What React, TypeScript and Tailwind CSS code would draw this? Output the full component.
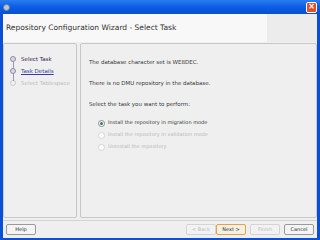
const font = { fontFamily: "Tahoma, 'DejaVu Sans', 'Liberation Sans', sans-serif" };

function Step({ label, state, first, last }: { label: string; state: "current" | "link" | "off"; first?: boolean; last?: boolean }) {
  return (
    <div className="flex items-center h-[12px]">
      <div className="w-[16px] h-full relative flex justify-center items-center">
        {!first && <div className="absolute left-[7.5px] top-0 h-[4px] w-px bg-[#9a9ab8]" />}
        {!last && <div className="absolute left-[7.5px] bottom-0 h-[4px] w-px bg-[#9a9ab8]" />}
        <div
          className={`w-[6px] h-[6px] rounded-full border ${
            state === "off" ? "border-[#c8c8c8] bg-[#f4f4f4]" : "border-[#8a8aa8] bg-[#d8d8e8]"
          }`}
        />
      </div>
      <span
        className={`text-[5.5px] ${
          state === "current"
            ? "text-[#302050] font-medium"
            : state === "link"
            ? "text-[#3a3aa0] underline"
            : "text-[#bcbcbc]"
        }`}
      >
        {label}
      </span>
    </div>
  );
}

function Radio({ label, checked, disabled }: { label: string; checked?: boolean; disabled?: boolean }) {
  return (
    <div className="flex items-center gap-[3px] h-[12px]">
      <div
        className={`w-[7px] h-[7px] rounded-full border flex items-center justify-center bg-white ${
          disabled ? "border-[#d4d4d4]" : "border-[#7a8aa0]"
        }`}
      >
        {checked && <div className="w-[3px] h-[3px] rounded-full bg-[#507040]" />}
      </div>
      <span className={`text-[5px] ${disabled ? "text-[#b8b8b8]" : "text-[#383838]"}`}>{label}</span>
    </div>
  );
}

function Btn({ label, disabled, focus }: { label: string; disabled?: boolean; focus?: boolean }) {
  return (
    <div
      className={`w-[30px] h-[11px] flex items-center justify-center text-[5px] rounded-[2px] border ${
        focus
          ? "border-[#e8a040] bg-[#f4f0e4] text-[#303030]"
          : disabled
          ? "border-[#d4d4d4] bg-[#f2f2f2] text-[#bcbcbc]"
          : "border-[#9a9a9a] bg-[#f4f4f4] text-[#303030]"
      }`}
    >
      {label}
    </div>
  );
}

export default function App() {
  return (
    <div className="w-[320px] h-[240px] bg-[#0a4fd8] flex flex-col overflow-hidden" style={font}>
      {/* title bar */}
      <div className="h-[14px] flex items-center justify-between px-[3px] bg-gradient-to-b from-[#2a7cf0] via-[#0b5ce6] to-[#0a4fd0]">
        <div className="w-[7px] h-[7px] rounded-full bg-[#b8c8d8] border border-[#708090]" />
        <div className="w-[11px] h-[11px] rounded-[2px] bg-[#e0502a] border border-white flex items-center justify-center text-white text-[8px] font-bold leading-none">
          ×
        </div>
      </div>
      <div className="flex-1 mx-[3px] mb-[2px] bg-[#efefef] flex flex-col">
        {/* header */}
        <div className="h-[28px] flex">
          <div className="w-[264px] bg-[#f8f8f8] flex items-center pl-[3px] text-[7.5px] text-[#303030]">
            Repository Configuration Wizard - Select Task
          </div>
          <div className="flex-1 bg-[#ececec]" />
        </div>
        {/* panels */}
        <div className="flex-1 flex gap-[3px] pt-[1px] pb-[2px]">
          <div className="w-[74px] border border-[#c8c8c8] rounded-[2px] pt-[9px] pl-[1px]">
            <Step label="Select Task" state="current" first />
            <Step label="Task Details" state="link" />
            <Step label="Select Tablespace" state="off" last />
          </div>
          <div className="flex-1 border border-[#c8c8c8] rounded-[2px] pt-[14px] pl-[8px] flex flex-col text-[5.5px] text-[#383838]">
            <div className="h-[8px] flex items-center">The database character set is WE8DEC.</div>
            <div className="h-[13px]" />
            <div className="h-[8px] flex items-center">There is no DMU repository in the database.</div>
            <div className="h-[13px]" />
            <div className="h-[8px] flex items-center">Select the task you want to perform:</div>
            <div className="pl-[9px] pt-[9px]">
              <Radio label="Install the repository in migration mode" checked />
              <Radio label="Install the repository in validation mode" disabled />
              <Radio label="Uninstall the repository" disabled />
            </div>
          </div>
        </div>
        {/* footer */}
        <div className="h-[18px] border-t border-[#d4d4d4] flex items-center px-[3px]">
          <Btn label="Help" />
          <div className="flex-1" />
          <Btn label="< Back" disabled />
          <Btn label="Next >" focus />
          <div className="w-[4px]" />
          <Btn label="Finish" disabled />
          <div className="w-[4px]" />
          <Btn label="Cancel" />
        </div>
      </div>
    </div>
  );
}
